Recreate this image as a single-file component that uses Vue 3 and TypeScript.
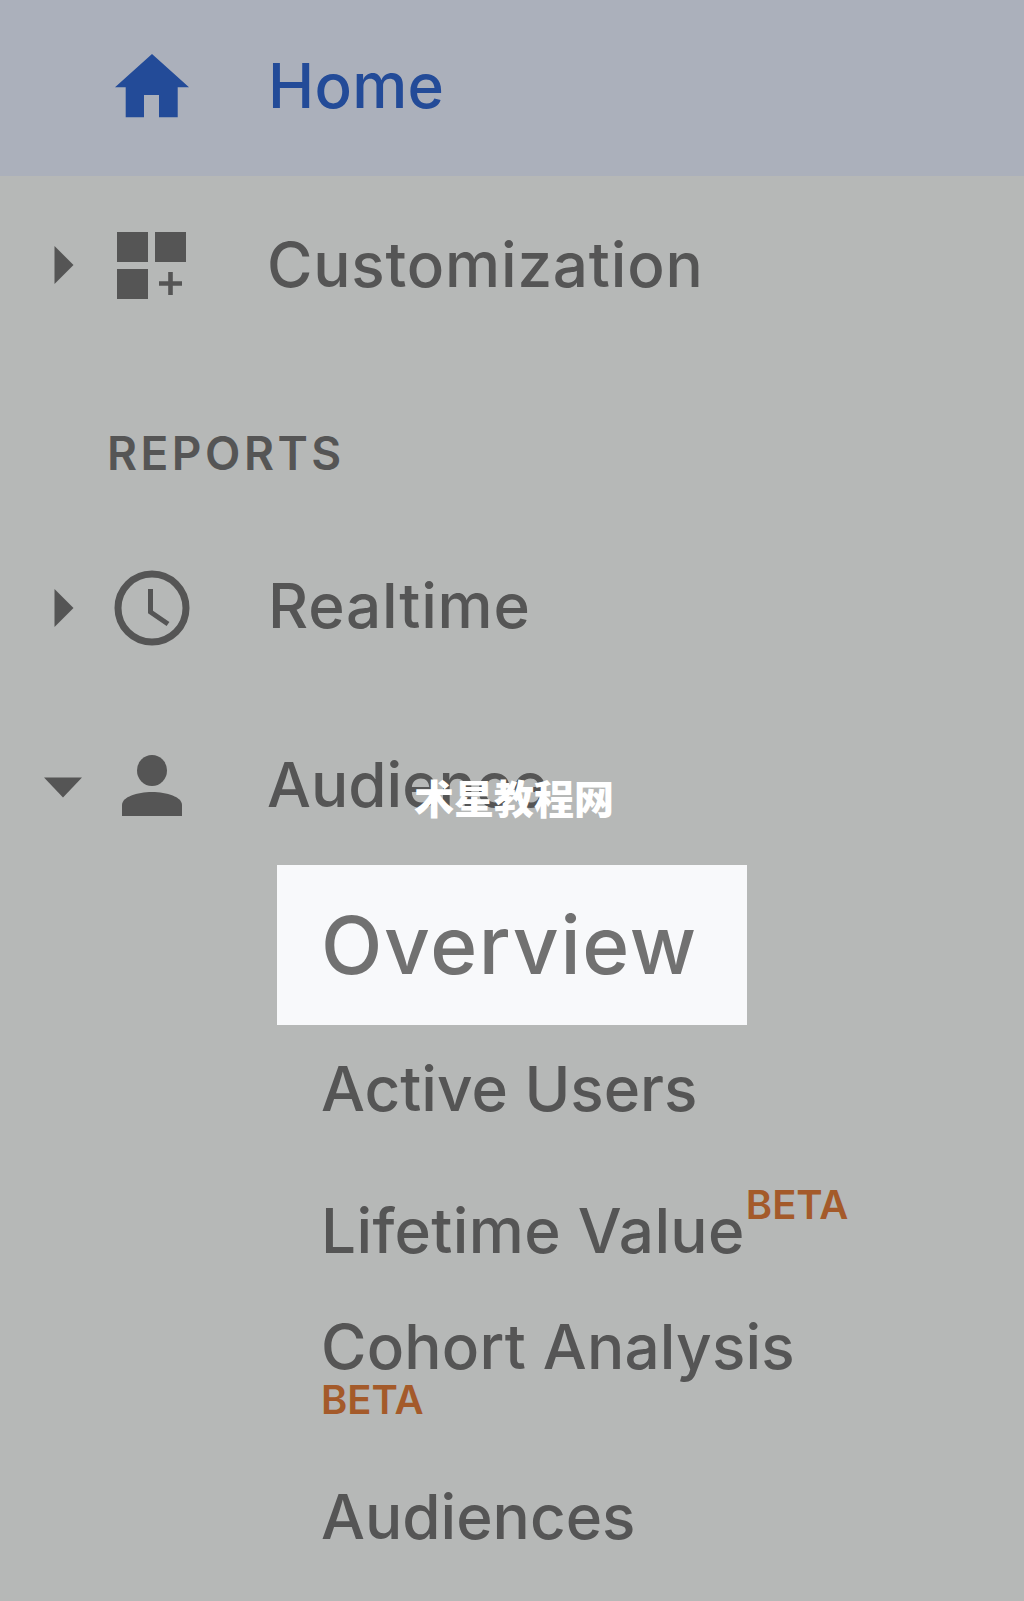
<script setup lang="ts">
interface SubItem { label: string; cls: string; beta?: 'sup' | 'below' }
const subItems: SubItem[] = [
  { label: 'Overview', cls: 'overview' },
  { label: 'Active Users', cls: 'active' },
  { label: 'Lifetime Value', cls: 'lifetime', beta: 'sup' },
  { label: 'Cohort Analysis', cls: 'cohort', beta: 'below' },
  { label: 'Audiences', cls: 'audiences' },
]
</script>

<template>
  <div class="page">
    <div class="row home">
      <span class="caret-slot"></span>
      <svg class="icon" viewBox="0 0 76 76"><path d="M38 4L75 37.300H63.700V67.300H45V45H30V67.300H11.700V37.300H1Z" fill="#234b98"/></svg>
      <span class="label">Home</span>
    </div>
    <div class="row custom">
      <span class="caret-slot"><svg width="20" height="38" viewBox="0 0 20 38"><path d="M0.500 0L19.500 19L0.500 38Z" fill="#555"/></svg></span>
      <svg class="icon" viewBox="0 0 76 76">
        <path fill="#555" d="M3 5H34V35H3ZM41 5H72V35H41ZM3 42H34V72H3Z"/>
        <path fill="#555" d="M54.200 45H58.800V54.200H68V58.800H58.800V68H54.200V58.800H45V54.200H54.200Z"/>
      </svg>
      <span class="label">Customization</span>
    </div>
    <div class="section">REPORTS</div>
    <div class="row realtime">
      <span class="caret-slot"><svg width="20" height="38" viewBox="0 0 20 38"><path d="M0.500 0L19.500 19L0.500 38Z" fill="#555"/></svg></span>
      <svg class="icon" viewBox="0 0 76 76">
        <circle cx="38" cy="38" r="34" fill="none" stroke="#555" stroke-width="7"/>
        <path d="M36.500 19V42L54 54" fill="none" stroke="#555" stroke-width="5"/>
      </svg>
      <span class="label">Realtime</span>
    </div>
    <div class="row audience">
      <span class="caret-slot"><svg class="down" width="38" height="21" viewBox="0 0 38 21"><path d="M0 0.500H38L19 20.500Z" fill="#555"/></svg></span>
      <svg class="icon" viewBox="0 0 76 76">
        <ellipse cx="38" cy="27.500" rx="15" ry="15.500" fill="#555"/>
        <path d="M8 73V62C8 54 23 49 38 49C53 49 68 54 68 62V73Z" fill="#555"/>
      </svg>
      <span class="label">Audience</span>
    </div>
    <div class="subs">
      <div v-for="item in subItems" :key="item.label" class="sub" :class="item.cls">
        <span class="sub-text">{{ item.label }}<sup v-if="item.beta === 'sup'" class="beta">BETA</sup></span>
        <span v-if="item.beta === 'below'" class="beta block">BETA</span>
      </div>
    </div>
    <div class="watermark">术星教程网</div>
  </div>
</template>

<style scoped>
.page {
  position: relative;
  width: 1024px;
  height: 1601px;
  overflow: hidden;
  background: #b6b8b7;
  color: #555;
  font-family: "Inter", "Noto Sans", sans-serif;
  font-variant-ligatures: none;
  font-weight: 500;
}
.row {
  display: flex;
  align-items: center;
  height: 176px;
  font-size: 62px;
}
.home { background: #abb0bb; color: #234b98; }
.custom { height: 178px; }
.caret-slot {
  width: 114px;
  padding-left: 54px;
  box-sizing: border-box;
  display: flex;
  align-items: center;
}
.down { margin-left: -10px; margin-top: 12px; }
.icon { width: 76px; height: 76px; margin-right: 78px; flex: none; }
.label { white-space: nowrap; }
.home .label { margin-bottom: 6px; letter-spacing: 0.300px; }
.custom .label { margin-bottom: 2px; margin-left: -1px; letter-spacing: 0.800px; }
.realtime .label { margin-bottom: 6px; letter-spacing: 0.800px; }
.audience .label { margin-top: 6px; margin-left: -1px; }
.section {
  height: 165px;
  box-sizing: border-box;
  padding: 72px 0 0 107px;
  font-size: 46px;
  line-height: 54px;
  font-weight: 600;
  letter-spacing: 3.500px;
}
.realtime { height: 178px; }
.audience { height: 168px; }
.sub { font-size: 62px; line-height: 80px; padding-left: 321px; white-space: nowrap; box-sizing: border-box; }
.overview {
  width: 470px;
  height: 160px;
  margin-left: 277px;
  padding-left: 44px;
  background: #f8f9fb;
  color: #717171;
  font-size: 80px;
  line-height: 160px;
  letter-spacing: 1.700px;
}
.active { height: 142px; padding-top: 24px; }
.lifetime { height: 118px; padding-top: 24px; letter-spacing: 0.350px; }
.cohort { height: 192px; padding-top: 22px; letter-spacing: 0.200px; }
.beta { color: #a45a2a; font-size: 40px; font-weight: 600; line-height: 40px; letter-spacing: 0; }
sup.beta { vertical-align: 34px; line-height: 0; margin-left: 1px; }
.block { display: block; margin-top: -7px; }
.watermark {
  position: absolute;
  left: 414px;
  top: 773px;
  color: #fff;
  font-family: "Noto Sans CJK SC", sans-serif;
  font-size: 40px;
  line-height: 48px;
  font-weight: 900;
  white-space: nowrap;
}
</style>
